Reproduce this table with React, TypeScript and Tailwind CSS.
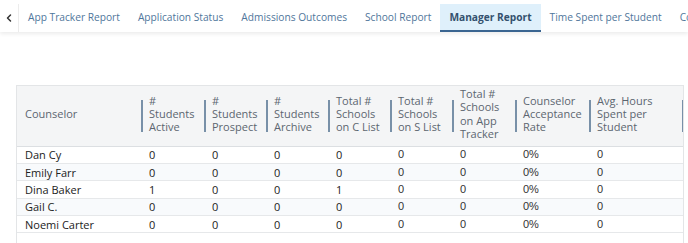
import { ChevronLeft } from "lucide-react";

const tabs = [
  "App Tracker Report",
  "Application Status",
  "Admissions Outcomes",
  "School Report",
  "Manager Report",
  "Time Spent per Student",
  "College List Report",
];

const columns = [
  { label: ["Counselor"], width: "w-[124px]" },
  { label: ["#", "Students", "Active"], width: "w-[63px]" },
  { label: ["#", "Students", "Prospect"], width: "w-[62px]" },
  { label: ["#", "Students", "Archive"], width: "w-[62px]" },
  { label: ["Total #", "Schools", "on C List"], width: "w-[62px]" },
  { label: ["Total #", "Schools", "on S List"], width: "w-[62px]" },
  { label: ["Total #", "Schools", "on App", "Tracker"], width: "w-[63px]" },
  { label: ["Counselor", "Acceptance", "Rate"], width: "w-[74px]" },
  { label: ["Avg. Hours", "Spent per", "Student"], width: "w-[94px]" },
];

const rows = [
  ["Dan Cy", "0", "0", "0", "0", "0", "0", "0%", "0"],
  ["Emily Farr", "0", "0", "0", "0", "0", "0", "0%", "0"],
  ["Dina Baker", "1", "0", "0", "1", "0", "0", "0%", "0"],
  ["Gail C.", "0", "0", "0", "0", "0", "0", "0%", "0"],
  ["Noemi Carter", "0", "0", "0", "0", "0", "0", "0%", "0"],
];

function TabBar() {
  return (
    <div className="relative z-10 flex h-8 items-stretch overflow-hidden bg-white shadow-[0_2px_4px_rgba(0,0,0,0.08)]">
      <button className="mt-1 flex w-[19px] shrink-0 items-center justify-center border-r border-[#ececec] text-[#333]">
        <ChevronLeft className="size-3" strokeWidth={3} />
      </button>
      <div className="flex items-stretch whitespace-nowrap">
        {tabs.map((tab) => {
          const active = tab === "Manager Report";
          return (
            <div
              key={tab}
              className={
                active
                  ? "mt-1 flex items-center border-b-2 border-[#3a6591] bg-[#dff0fb] px-[9px] pt-[2px] text-[10.2px] font-bold text-[#34506e]"
                  : "mt-1 flex items-center px-[9px] text-[10.2px] text-[#50769b]"
              }
            >
              {tab}
            </div>
          );
        })}
      </div>
    </div>
  );
}

function ReportTable() {
  return (
    <div className="ml-4 mt-[53px] min-h-[200px] w-[668px] border border-[#e3e5e7]">
      <table className="w-full table-fixed border-collapse">
        <thead>
          <tr className="h-[60px] border-b border-[#dcdfe2] bg-[#f4f5f6]">
            {columns.map((col, i) => (
              <th
                key={i}
                className={`relative ${col.width} p-0 text-left align-middle text-[11px] font-normal leading-[13.4px] text-[#5c6670]`}
              >
                {i > 0 && (
                  <span className="absolute left-0 top-1/2 h-[32px] w-[1.5px] -translate-y-1/2 bg-[#7890a8]" />
                )}
                {i === columns.length - 1 && (
                  <span className="absolute right-0 top-1/2 h-[32px] w-[1.5px] -translate-y-1/2 bg-[#7890a8]" />
                )}
                <div className="-mt-[4px] pl-2">
                  {col.label.map((line) => (
                    <div key={line}>{line}</div>
                  ))}
                </div>
              </th>
            ))}
          </tr>
        </thead>
        <tbody>
          {rows.map((row, r) => (
            <tr
              key={row[0]}
              className={`h-[17.4px] border-b border-[#e6e8ea] ${r % 2 === 1 ? "bg-[#f8fafc]" : "bg-white"}`}
            >
              {row.map((cell, c) => (
                <td
                  key={c}
                  className={
                    c >= 5
                      ? "p-0 pl-2 text-[11px] leading-[15px] text-[#333] [font-family:'Liberation_Sans',Arial,sans-serif]"
                      : "p-0 pl-2 text-[11px] leading-[15px] text-[#222]"
                  }
                >
                  {cell}
                </td>
              ))}
            </tr>
          ))}
        </tbody>
      </table>
    </div>
  );
}

export default function App() {
  return (
    <div className="h-[243px] w-[688px] overflow-hidden bg-white [font-family:'Open_Sans',sans-serif]">
      <TabBar />
      <ReportTable />
    </div>
  );
}
